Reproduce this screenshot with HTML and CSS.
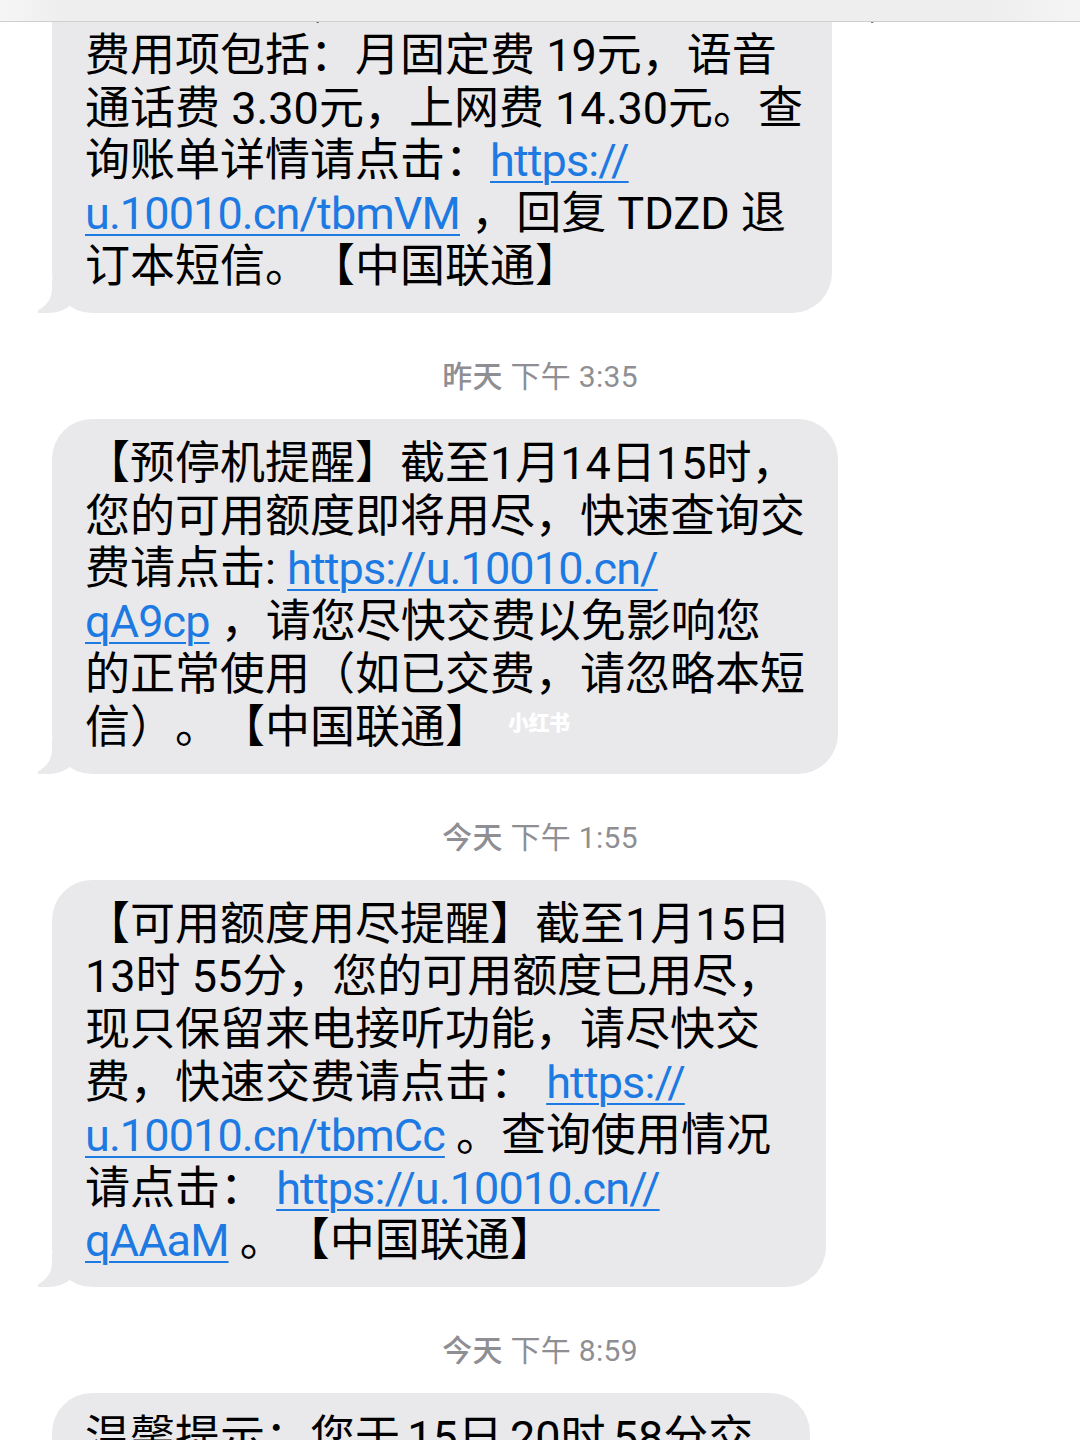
FILE: index.html
```html
<!DOCTYPE html>
<html lang="zh-CN">
<head>
<meta charset="utf-8">
<title>信息</title>
<link rel="stylesheet" href="styles.css">
</head>
<body>
<div class="topbar"></div>
<main class="thread">
  <div class="bubble bubble--one">
    <span class="line">尊敬的客户，您1月已产生话费 36.60元，主要</span>
    <span class="line">费用项包括：月固定费 19元，语音</span>
    <span class="line">通话费 3.30元，上网费 14.30元。查</span>
    <span class="line">询账单详情请点击：<a class="link" href="#">https://</a></span>
    <span class="line"><a class="link" href="#">u.10010.cn/tbmVM</a> ，回复 TDZD 退</span>
    <span class="line">订本短信。【中国联通】</span>
  </div>

  <div class="stamp"><b class="stamp__day">昨天</b> 下午 3:35</div>

  <div class="bubble bubble--two">
    <span class="line">【预停机提醒】截至1月14日15时，</span>
    <span class="line">您的可用额度即将用尽，快速查询交</span>
    <span class="line">费请点击: <a class="link" href="#">https://u.10010.cn/</a></span>
    <span class="line"><a class="link" href="#">qA9cp</a> ，请您尽快交费以免影响您</span>
    <span class="line">的正常使用（如已交费，请忽略本短</span>
    <span class="line">信）。【中国联通】</span>
    <span class="watermark">小红书</span>
  </div>

  <div class="stamp"><b class="stamp__day">今天</b> 下午 1:55</div>

  <div class="bubble bubble--three">
    <span class="line">【可用额度用尽提醒】截至1月15日</span>
    <span class="line">13时 55分，您的可用额度已用尽，</span>
    <span class="line">现只保留来电接听功能，请尽快交</span>
    <span class="line">费，快速交费请点击： <a class="link" href="#">https://</a></span>
    <span class="line"><a class="link" href="#">u.10010.cn/tbmCc</a> 。查询使用情况</span>
    <span class="line">请点击： <a class="link" href="#">https://u.10010.cn//</a></span>
    <span class="line"><a class="link" href="#">qAAaM</a> 。【中国联通】</span>
  </div>

  <div class="stamp"><b class="stamp__day">今天</b> 下午 8:59</div>

  <div class="bubble bubble--four">
    <span class="line">温馨提示：您于 15日 20时 58分交</span>
    <span class="line">费100.00元，已成功到账。</span>
  </div>
</main>
</body>
</html>
```

FILE: styles.css
```css
html, body {
  margin: 0;
  padding: 0;
  background: #ffffff;
}

body {
  width: 1080px;
  height: 1440px;
  overflow: hidden;
  position: relative;
  font-family: "Roboto", "Noto Sans CJK SC", sans-serif;
  color: #000;
  text-spacing-trim: space-all;
}

.topbar {
  position: absolute;
  top: 0;
  left: 0;
  right: 0;
  height: 21px;
  background: linear-gradient(to right, #f6f6f6 0, #eeeeee 60px, #eeeeee 980px, #f4f4f4 1080px);
  border-bottom: 1px solid #cfcfcf;
  z-index: 5;
}

.thread {
  display: flex;
  flex-direction: column;
  align-items: flex-start;
  padding-left: 52px;
  margin-top: -42px;
}

.bubble {
  position: relative;
  box-sizing: border-box;
  background: #e9e9eb;
  border-radius: 40px;
  padding: 19px 0 19px 33px;
  font-size: 45px;
  line-height: 52.8px;
  white-space: nowrap;
  display: flex;
  flex-direction: column;
}

.bubble::before {
  content: "";
  position: absolute;
  bottom: 0;
  left: -14px;
  width: 44px;
  height: 34px;
  background: #e9e9eb;
  border-bottom-right-radius: 34px 30px;
  z-index: 0;
}

.bubble::after {
  content: "";
  position: absolute;
  bottom: 0;
  left: -40px;
  width: 40px;
  height: 36px;
  background: #ffffff;
  border-bottom-right-radius: 26px 24px;
  z-index: 1;
}

.line {
  position: relative;
  z-index: 2;
  display: block;
}

.bubble--one { width: 780px; }
.bubble--two { width: 786px; }
.bubble--three { width: 774px; }
.bubble--four { width: 758px; }

.bubble--four .line {
  word-spacing: -4px;
}

.link {
  color: #1d7ae2;
  letter-spacing: -0.9px;
  text-decoration: underline;
  text-decoration-thickness: 2px;
  text-underline-offset: 5px;
}

.stamp {
  align-self: center;
  margin: 46px 0 24px -52px;
  font-size: 30px;
  line-height: 36px;
  color: #8e8e93;
  letter-spacing: 0.3px;
}

.stamp__day {
  font-weight: 500;
}

.watermark {
  position: absolute;
  left: 456px;
  top: 290px;
  z-index: 3;
  font-family: "Noto Sans CJK SC", sans-serif;
  font-size: 21px;
  line-height: 24px;
  font-weight: 900;
  letter-spacing: -0.5px;
  color: #ffffff;
}
```
